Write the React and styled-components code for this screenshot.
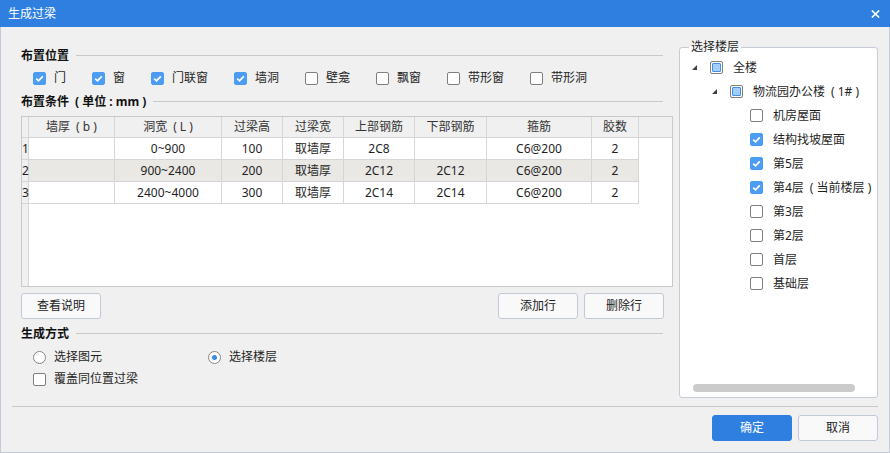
import React from "react";
import styled, { createGlobalStyle } from "styled-components";

const GlobalStyle = createGlobalStyle`
  * { box-sizing: border-box; }
  body {
    margin: 0;
    background: #ffffff;
  }
`;

const Window = styled.div`
  width: 890px;
  height: 453px;
  display: flex;
  flex-direction: column;
  font-family: "Noto Sans", "Noto Sans CJK SC", sans-serif;
  font-size: 12px;
  color: #1f1f1f;
`;

const TitleBar = styled.div`
  height: 27px;
  flex-shrink: 0;
  display: flex;
  align-items: center;
  justify-content: space-between;
  padding: 0 10px 0 8px;
  background: #2e7fe0;
  color: #ffffff;
  line-height: 16px;
`;

const CloseButton = styled.span`
  display: flex;
  width: 10px;
  height: 10px;
  align-items: center;
  justify-content: center;
`;

const Body = styled.div`
  flex: 1;
  display: flex;
  flex-direction: column;
  background: #f0f0f0;
  border: 1px solid #c3cad8;
  border-top: none;
`;

const Main = styled.div`
  display: flex;
  gap: 6px;
  padding: 13px 11px 8px 20px;
`;

const LeftPanel = styled.div`
  width: 652px;
  display: flex;
  flex-direction: column;
  padding-top: 8px;
`;

const SectionTitle = styled.div`
  display: flex;
  align-items: center;
  gap: 7px;
  height: 16px;
  line-height: 16px;
  margin-top: ${(p) => p.$top || 0}px;
  margin-right: 10px;
  font-weight: bold;
  color: #111;
  white-space: pre;

  &::after {
    content: "";
    flex: 1;
    height: 1px;
    margin-top: -1px;
    background: #c9c9c9;
  }
`;

const OptionRow = styled.div`
  display: flex;
  align-items: center;
  gap: 26px;
  height: 18px;
  padding-left: 12px;
  margin-top: ${(p) => p.$top || 0}px;
`;

const OptionGrid = styled.div`
  display: grid;
  grid-template-columns: 175px auto;
  align-items: center;
  height: 18px;
  padding-left: 12px;
  margin-top: ${(p) => p.$top || 0}px;
`;

const Option = styled.label`
  display: flex;
  align-items: center;
  gap: 8px;
  line-height: 18px;
  white-space: nowrap;
`;

const Box = styled.span`
  position: relative;
  width: 13px;
  height: 13px;
  flex-shrink: 0;
  display: flex;
  align-items: center;
  justify-content: center;
  border-radius: 2px;
  border: 1px solid ${(p) => (p.$state === "on" ? "#4d9cf3" : "#7f7f7f")};
  background: ${(p) => (p.$state === "on" ? "#4d9cf3" : "#ffffff")};

  ${(p) =>
    p.$state === "mixed" &&
    `
    &::after {
      content: "";
      position: absolute;
      inset: 1px;
      border-radius: 1px;
      border: 1px solid #3f8fe9;
      background: #a3cdfd;
    }
  `}
`;

const Radio = styled.span`
  position: relative;
  width: 13px;
  height: 13px;
  flex-shrink: 0;
  border-radius: 50%;
  border: 1px solid #858585;
  background: #ffffff;

  ${(p) =>
    p.$on &&
    `
    &::after {
      content: "";
      position: absolute;
      left: 3px;
      top: 3px;
      width: 5px;
      height: 5px;
      border-radius: 50%;
      background: #3d8be8;
    }
  `}
`;

const Check = ({ state = "off" }) => (
  <Box $state={state}>
    {state === "on" && (
      <svg width="11" height="11" viewBox="0 0 11 11">
        <path d="M2.2 5.6 L4.5 7.8 L8.8 3.3" fill="none" stroke="#fff" strokeWidth="1.8" />
      </svg>
    )}
  </Box>
);

/* table */
const TableFrame = styled.div`
  display: flex;
  height: 171px;
  margin-top: 6px;
  border: 1px solid #c9c9c9;
  background: #ffffff;
`;

const Gutter = styled.div`
  width: 7px;
  flex-shrink: 0;
  display: flex;
  flex-direction: column;
  background: #f0f0f0;
  border-right: 1px solid #d6d6d6;
`;

const GutterCell = styled.div`
  height: ${(p) => (p.$head ? 21 : 22)}px;
  line-height: 21px;
  border-bottom: 1px solid #d6d6d6;
  overflow: visible;
  white-space: nowrap;
`;

const GridArea = styled.div`
  flex: 1;
  display: flex;
  flex-direction: column;
`;

const HeaderRow = styled.div`
  display: flex;
  height: 21px;
  background: #f0f0f0;
  border-bottom: 1px solid #d6d6d6;
`;

const DataRow = styled.div`
  display: flex;
  align-self: flex-start;
  height: 22px;
  background: ${(p) => (p.$alt ? "#e9e8e4" : "#ffffff")};
`;

const Cell = styled.div`
  width: ${(p) => p.$w}px;
  flex-shrink: 0;
  text-align: center;
  line-height: ${(p) => (p.$head ? 20 : 21)}px;
  border-right: 1px solid #d6d6d6;
  border-bottom: ${(p) => (p.$head ? "none" : "1px solid #d6d6d6")};
  color: ${(p) => (p.$head ? "#333" : "#1f1f1f")};
  white-space: pre;
`;

const ButtonRow = styled.div`
  display: flex;
  justify-content: space-between;
  margin-top: 6px;
  padding-right: 9px;
`;

const ButtonGroup = styled.div`
  display: flex;
  gap: 6px;
`;

const Button = styled.button`
  width: 80px;
  height: 26px;
  padding: 0;
  border-radius: 3px;
  border: 1px solid ${(p) => (p.$primary ? "#2e7fe0" : "#c1c9d6")};
  background: ${(p) => (p.$primary ? "#2e7fe0" : "#f9f9f9")};
  color: ${(p) => (p.$primary ? "#ffffff" : "#222")};
  font-family: inherit;
  font-size: 12px;
  line-height: 24px;
`;

/* floor tree */
const GroupBox = styled.div`
  position: relative;
  width: 199px;
  height: 351px;
  margin-top: 7px;
  display: flex;
  flex-direction: column;
  padding-top: 7px;
  border: 1px solid #c6ccd6;
  border-radius: 3px;
  background: #ffffff;
`;

const Legend = styled.span`
  position: absolute;
  top: -9px;
  left: 9px;
  padding: 0 2px;
  line-height: 16px;
  background: linear-gradient(#f0f0f0 8px, #ffffff 8px);
`;

const TreeList = styled.div`
  flex: 1;
  display: flex;
  flex-direction: column;
`;

const TreeRow = styled.div`
  display: flex;
  align-items: center;
  gap: 10px;
  height: 24px;
  padding-left: ${(p) => 12 + p.$level * 20}px;
  white-space: pre;
`;

const TreeNode = styled.span`
  display: flex;
  align-items: center;
`;

const Toggle = styled.span`
  width: 18px;
  height: 13px;
  display: flex;
  align-items: center;
`;

const ScrollThumb = styled.div`
  width: 162px;
  height: 8px;
  margin: 0 0 5px 13px;
  border-radius: 4px;
  background: #cbcbcb;
`;

const Separator = styled.div`
  height: 1px;
  margin: 0 11px 0 11px;
  background: #c9c9c9;
`;

const Footer = styled.div`
  display: flex;
  justify-content: flex-end;
  gap: 6px;
  padding: 8px 11px 0 0;
`;

const positions = [
  ["门", "on"],
  ["窗", "on"],
  ["门联窗", "on"],
  ["墙洞", "on"],
  ["壁龛", "off"],
  ["飘窗", "off"],
  ["带形窗", "off"],
  ["带形洞", "off"],
];

const columns = [
  ["墙厚\u2002( b )", 86],
  ["洞宽\u2002( L )", 107],
  ["过梁高", 61],
  ["过梁宽", 61],
  ["上部钢筋", 71],
  ["下部钢筋", 72],
  ["箍筋", 105],
  ["胶数", 47],
];

const rows = [
  ["", "0~900", "100", "取墙厚", "2C8", "", "C6@200", "2"],
  ["", "900~2400", "200", "取墙厚", "2C12", "2C12", "C6@200", "2"],
  ["", "2400~4000", "300", "取墙厚", "2C14", "2C14", "C6@200", "2"],
];

const floors = [
  { name: "全楼", level: 0, state: "mixed", open: true },
  { name: "物流园办公楼\u2002( 1# )", level: 1, state: "mixed", open: true },
  { name: "机房屋面", level: 2, state: "off" },
  { name: "结构找坡屋面", level: 2, state: "on" },
  { name: "第5层", level: 2, state: "on" },
  { name: "第4层\u2002( 当前楼层 )", level: 2, state: "on" },
  { name: "第3层", level: 2, state: "off" },
  { name: "第2层", level: 2, state: "off" },
  { name: "首层", level: 2, state: "off" },
  { name: "基础层", level: 2, state: "off" },
];

const App = () => {
  return (
    <Window>
      <GlobalStyle />
      <TitleBar>
        <span>生成过梁</span>
        <CloseButton>
          <svg width="9" height="8" viewBox="0 0 9 8">
            <path d="M0.8 0.5 L8.2 7.5 M8.2 0.5 L0.8 7.5" stroke="#fff" strokeWidth="1.6" />
          </svg>
        </CloseButton>
      </TitleBar>
      <Body>
        <Main>
          <LeftPanel>
            <SectionTitle>布置位置</SectionTitle>
            <OptionRow $top={5}>
              {positions.map(([label, state]) => (
                <Option key={label}>
                  <Check state={state} />
                  {label}
                </Option>
              ))}
            </OptionRow>
            <SectionTitle $top={7}>{"布置条件\u2002( 单位 : mm )"}</SectionTitle>
            <TableFrame>
              <Gutter>
                <GutterCell $head />
                {rows.map((_, i) => (
                  <GutterCell key={i}>{i + 1}</GutterCell>
                ))}
              </Gutter>
              <GridArea>
                <HeaderRow>
                  {columns.map(([title, w]) => (
                    <Cell key={title} $w={w} $head>
                      {title}
                    </Cell>
                  ))}
                </HeaderRow>
                {rows.map((row, i) => (
                  <DataRow key={i} $alt={i === 1}>
                    {row.map((value, j) => (
                      <Cell key={j} $w={columns[j][1]}>
                        {value}
                      </Cell>
                    ))}
                  </DataRow>
                ))}
              </GridArea>
            </TableFrame>
            <ButtonRow>
              <Button>查看说明</Button>
              <ButtonGroup>
                <Button>添加行</Button>
                <Button>删除行</Button>
              </ButtonGroup>
            </ButtonRow>
            <SectionTitle $top={7}>生成方式</SectionTitle>
            <OptionGrid $top={6}>
              <Option>
                <Radio />
                选择图元
              </Option>
              <Option>
                <Radio $on />
                选择楼层
              </Option>
            </OptionGrid>
            <OptionRow $top={4}>
              <Option>
                <Check />
                覆盖同位置过梁
              </Option>
            </OptionRow>
          </LeftPanel>
          <GroupBox>
            <Legend>选择楼层</Legend>
            <TreeList>
              {floors.map((f) => (
                <TreeRow key={f.name} $level={f.level}>
                  <TreeNode>
                    <Toggle>
                      {f.open && (
                        <svg width="5" height="5" viewBox="0 0 5 5">
                          <polygon points="5,0 5,5 0,5" fill="#404040" />
                        </svg>
                      )}
                    </Toggle>
                    <Check state={f.state} />
                  </TreeNode>
                  {f.name}
                </TreeRow>
              ))}
            </TreeList>
            <ScrollThumb />
          </GroupBox>
        </Main>
        <Separator />
        <Footer>
          <Button $primary>确定</Button>
          <Button>取消</Button>
        </Footer>
      </Body>
    </Window>
  );
};

export default App;
